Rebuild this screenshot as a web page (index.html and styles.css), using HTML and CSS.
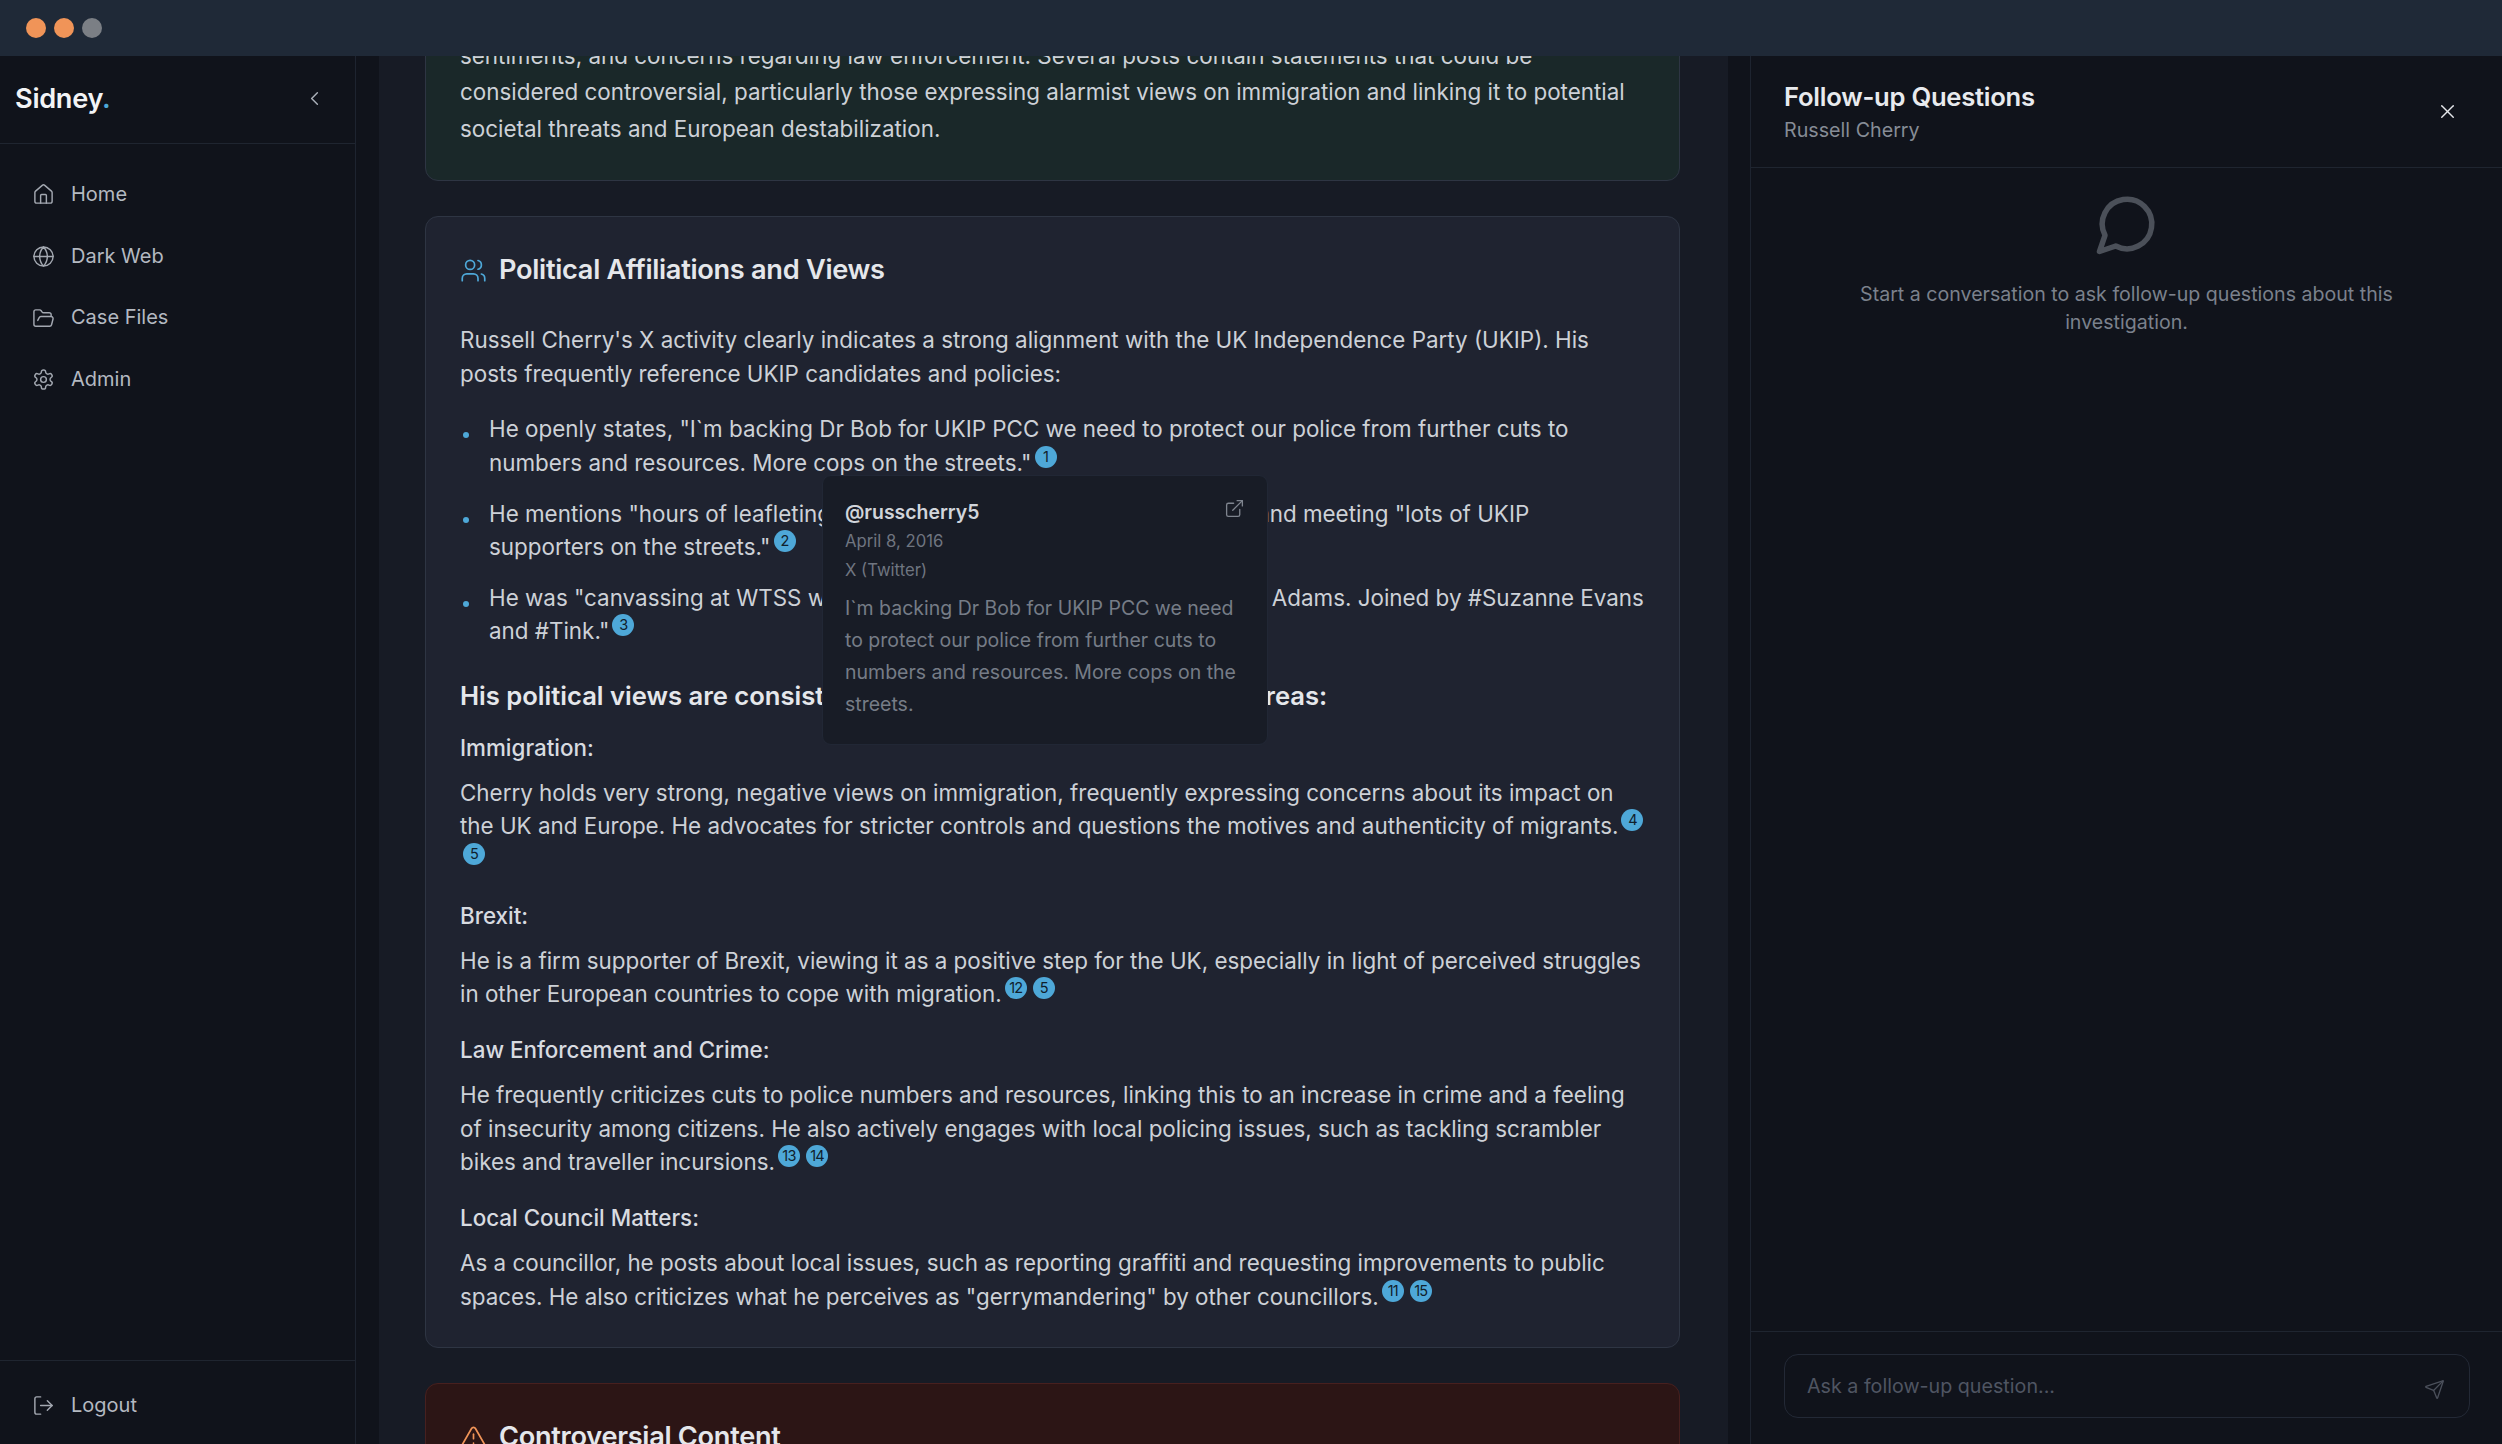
FILE: index.html
```html
<!DOCTYPE html>
<html lang="en">
<head>
  <meta charset="UTF-8">
  <meta name="viewport" content="width=device-width, initial-scale=1.0">
  <title>Sidney</title>
  <link rel="stylesheet" href="styles.css">
</head>
<body>
  <div class="titlebar">
    <span class="light orange"></span>
    <span class="light orange"></span>
    <span class="light gray"></span>
  </div>

  <div class="app">
    <aside class="sidebar">
      <div class="brand">
        <div class="logo">Sidney<span class="logo-dot">.</span></div>
        <svg class="icon collapse" viewBox="0 0 24 24"><path d="m15 18-6-6 6-6"/></svg>
      </div>
      <nav class="nav">
        <a class="nav-item">
          <svg class="icon" viewBox="0 0 24 24"><path d="M15 21v-8a1 1 0 0 0-1-1h-4a1 1 0 0 0-1 1v8"/><path d="M3 10a2 2 0 0 1 .709-1.528l7-5.999a2 2 0 0 1 2.582 0l7 5.999A2 2 0 0 1 21 10v9a2 2 0 0 1-2 2H5a2 2 0 0 1-2-2z"/></svg>
          Home
        </a>
        <a class="nav-item">
          <svg class="icon" viewBox="0 0 24 24"><circle cx="12" cy="12" r="10"/><path d="M12 2a14.5 14.5 0 0 0 0 20 14.5 14.5 0 0 0 0-20"/><path d="M2 12h20"/></svg>
          Dark Web
        </a>
        <a class="nav-item">
          <svg class="icon" viewBox="0 0 24 24"><path d="m6 14 1.5-2.9A2 2 0 0 1 9.24 10H20a2 2 0 0 1 1.94 2.5l-1.54 6a2 2 0 0 1-1.95 1.5H4a2 2 0 0 1-2-2V5a2 2 0 0 1 2-2h3.9a2 2 0 0 1 1.69.9l.81 1.2a2 2 0 0 0 1.67.9H18a2 2 0 0 1 2 2v2"/></svg>
          Case Files
        </a>
        <a class="nav-item">
          <svg class="icon" viewBox="0 0 24 24"><path d="M12.22 2h-.44a2 2 0 0 0-2 2v.18a2 2 0 0 1-1 1.73l-.43.25a2 2 0 0 1-2 0l-.15-.08a2 2 0 0 0-2.73.73l-.22.38a2 2 0 0 0 .73 2.73l.15.1a2 2 0 0 1 1 1.72v.51a2 2 0 0 1-1 1.74l-.15.09a2 2 0 0 0-.73 2.73l.22.38a2 2 0 0 0 2.73.73l.15-.08a2 2 0 0 1 2 0l.43.25a2 2 0 0 1 1 1.73V20a2 2 0 0 0 2 2h.44a2 2 0 0 0 2-2v-.18a2 2 0 0 1 1-1.73l.43-.25a2 2 0 0 1 2 0l.15.08a2 2 0 0 0 2.73-.73l.22-.39a2 2 0 0 0-.73-2.73l-.15-.08a2 2 0 0 1-1-1.74v-.5a2 2 0 0 1 1-1.74l.15-.09a2 2 0 0 0 .73-2.73l-.22-.38a2 2 0 0 0-2.73-.73l-.15.08a2 2 0 0 1-2 0l-.43-.25a2 2 0 0 1-1-1.73V4a2 2 0 0 0-2-2z"/><circle cx="12" cy="12" r="3"/></svg>
          Admin
        </a>
      </nav>
      <div class="sidebar-foot">
        <a class="nav-item">
          <svg class="icon" viewBox="0 0 24 24"><path d="M9 21H5a2 2 0 0 1-2-2V5a2 2 0 0 1 2-2h4"/><path d="m16 17 5-5-5-5"/><path d="M21 12H9"/></svg>
          Logout
        </a>
      </div>
    </aside>

    <main class="content">
      <div class="scroll">
        <div class="stack">
          <section class="card card-green">
            <p>sentiments, and concerns regarding law enforcement. Several posts contain statements that could be considered controversial, particularly those expressing alarmist views on immigration and linking it to potential societal threats and European destabilization.</p>
          </section>

          <section class="card">
            <h2 class="card-title">
              <svg class="icon title-icon blue" viewBox="0 0 24 24"><path d="M16 21v-2a4 4 0 0 0-4-4H6a4 4 0 0 0-4 4v2"/><circle cx="9" cy="7" r="4"/><path d="M22 21v-2a4 4 0 0 0-3-3.87"/><path d="M16 3.13a4 4 0 0 1 0 7.75"/></svg>
              Political Affiliations and Views
            </h2>
            <p>Russell Cherry's X activity clearly indicates a strong alignment with the UK Independence Party (UKIP). His posts frequently reference UKIP candidates and policies:</p>
            <ul class="points">
              <li><div>He openly states, "I`m backing Dr Bob for UKIP PCC we need to protect our police from further cuts to numbers and resources. More cops on the streets."<span class="cite">1</span></div></li>
              <li><div>He mentions "hours of leafleting in Thanet with all the local team today," and meeting "lots of UKIP<br>supporters on the streets."<span class="cite">2</span></div></li>
              <li><div>He was "canvassing at WTSS with the local UKIP team and also Cllr. Tony Adams. Joined by #Suzanne Evans and #Tink."<span class="cite">3</span></div></li>
            </ul>
            <h3 class="lead">His political views are consistently right-wing, across these key areas:</h3>

            <h4 class="topic">Immigration:</h4>
            <p>Cherry holds very strong, negative views on immigration, frequently expressing concerns about its impact on the UK and Europe. He advocates for stricter controls and questions the motives and authenticity of migrants.<span class="cite">4</span><span class="cite">5</span></p>

            <h4 class="topic">Brexit:</h4>
            <p>He is a firm supporter of Brexit, viewing it as a positive step for the UK, especially in light of perceived struggles in other European countries to cope with migration.<span class="cite">12</span><span class="cite">5</span></p>

            <h4 class="topic">Law Enforcement and Crime:</h4>
            <p>He frequently criticizes cuts to police numbers and resources, linking this to an increase in crime and a feeling of insecurity among citizens. He also actively engages with local policing issues, such as tackling scrambler bikes and traveller incursions.<span class="cite">13</span><span class="cite">14</span></p>

            <h4 class="topic">Local Council Matters:</h4>
            <p>As a councillor, he posts about local issues, such as reporting graffiti and requesting improvements to public spaces. He also criticizes what he perceives as "gerrymandering" by other councillors.<span class="cite">11</span><span class="cite">15</span></p>

            <div class="tooltip">
              <div class="tooltip-head">
                <span class="handle">@russcherry5</span>
                <svg class="icon open-link" viewBox="0 0 24 24"><path d="M15 3h6v6"/><path d="M10 14 21 3"/><path d="M18 13v6a2 2 0 0 1-2 2H5a2 2 0 0 1-2-2V8a2 2 0 0 1 2-2h6"/></svg>
              </div>
              <div class="meta">April 8, 2016</div>
              <div class="meta">X (Twitter)</div>
              <p class="quote">I`m backing Dr Bob for UKIP PCC we need to protect our police from further cuts to numbers and resources. More cops on the streets.</p>
            </div>
          </section>

          <section class="card card-red">
            <h2 class="card-title">
              <svg class="icon title-icon orange-icon" viewBox="0 0 24 24"><path d="m21.73 18-8-14a2 2 0 0 0-3.48 0l-8 14A2 2 0 0 0 4 21h16a2 2 0 0 0 1.73-3"/><path d="M12 9v4"/><path d="M12 17h.01"/></svg>
              Controversial Content
            </h2>
          </section>
        </div>
      </div>
    </main>

    <aside class="panel">
      <header class="panel-head">
        <div>
          <h2 class="panel-title">Follow-up Questions</h2>
          <div class="panel-sub">Russell Cherry</div>
        </div>
        <svg class="icon close" viewBox="0 0 24 24"><path d="M18 6 6 18"/><path d="m6 6 12 12"/></svg>
      </header>
      <div class="panel-body">
        <svg class="icon chat" viewBox="0 0 24 24"><path d="M7.9 20A9 9 0 1 0 4 16.1L2 22Z"/></svg>
        <p class="empty">Start a conversation to ask follow-up questions about this investigation.</p>
      </div>
      <div class="panel-foot">
        <div class="ask">
          <input class="ask-input" type="text" placeholder="Ask a follow-up question...">
          <svg class="icon send" viewBox="0 0 24 24"><path d="M14.536 21.686a.5.5 0 0 0 .937-.024l6.5-19a.496.496 0 0 0-.635-.635l-19 6.5a.5.5 0 0 0-.024.937l7.93 3.18a2 2 0 0 1 1.112 1.11z"/><path d="m21.854 2.147-10.94 10.939"/></svg>
        </div>
      </div>
    </aside>
  </div>
</body>
</html>
```

FILE: styles.css
```css
* {
  box-sizing: border-box;
}

html,
body {
  margin: 0;
  height: 100%;
}

body {
  height: 1444px;
  overflow: hidden;
  display: flex;
  flex-direction: column;
  background-color: #10131b;
  color: #cdd1d7;
  font-family: Inter, "Liberation Sans", sans-serif;
  font-size: 22.4px;
  line-height: 33.6px;
}

.icon {
  flex: none;
  fill: none;
  stroke: currentColor;
  stroke-width: 1.5;
  stroke-linecap: round;
  stroke-linejoin: round;
}

/* top window bar */
.titlebar {
  height: 56px;
  flex: none;
  display: flex;
  align-items: center;
  gap: 8px;
  padding-left: 26px;
  background-color: #1f2937;
  padding-bottom: 1px;
}

.light {
  width: 20px;
  height: 20px;
  border-radius: 50%;
}

.light.orange {
  background-color: #f09458;
}

.light.gray {
  background-color: #7b7f85;
}

.app {
  flex: 1;
  min-height: 0;
  display: flex;
}

/* left nav */
.sidebar {
  width: 356px;
  flex: none;
  display: flex;
  flex-direction: column;
  border-right: 1px solid #1e2430;
  background-color: #10131b;
}

.brand {
  height: 88px;
  flex: none;
  display: flex;
  align-items: center;
  justify-content: space-between;
  padding: 0 29px 1px 15px;
  border-bottom: 1px solid #1f2530;
}

.logo {
  font-size: 27.2px;
  font-weight: 600;
  letter-spacing: -0.3px;
  color: #f3f4f6;
}

.logo-dot {
  color: #4ea8d8;
}

.collapse {
  width: 23px;
  height: 23px;
  margin-bottom: 2px;
  color: #aab0b9;
}

.nav {
  flex: 1;
  padding-top: 20px;
}

.nav-item {
  height: 61.7px;
  display: flex;
  align-items: center;
  gap: 16px;
  padding-left: 32px;
  font-size: 20px;
  color: #b4b9c1;
}

.nav-item .icon {
  width: 23px;
  height: 23px;
  color: #a3a8b1;
}

.sidebar-foot {
  height: 84px;
  flex: none;
  padding-top: 14px;
  border-top: 1px solid #1f2530;
}

/* middle column */
.content {
  flex: 1;
  min-width: 0;
  padding: 0 22px 0 23px;
  overflow: hidden;
}

.scroll {
  height: 100%;
  overflow: hidden;
  padding: 0 48px 0 46px;
  background-color: #171b25;
}

.stack {
  display: flex;
  flex-direction: column;
  gap: 35px;
  margin-top: -54px;
}

.card {
  position: relative;
  padding: 34px 32px 34px 34px;
  border: 1px solid #2e3543;
  border-radius: 13px;
  background-color: #1f2330;
}

.card p {
  margin: 0;
}

.card-green {
  padding-top: 35px;
  padding-bottom: 33px;
  background-color: #1a2829;
  line-height: 36.4px;
}

.card-red {
  background-color: #2c1515;
  border-color: #47201f;
}

.card-title {
  display: flex;
  align-items: center;
  gap: 13px;
  margin: -1px 0 33px;
  font-size: 27.2px;
  line-height: 40px;
  font-weight: 600;
  letter-spacing: -0.3px;
  color: #e5e7eb;
}

.title-icon {
  width: 27px;
  height: 27px;
}

.card-title .title-icon {
  margin-right: -1px;
}

.blue {
  color: #4ea8d8;
}

.orange-icon {
  color: #f09458;
}

.points {
  list-style: none;
  margin: 22px 0 0;
  padding: 0 0 0 3px;
}

.points li {
  display: flex;
  gap: 20px;
  margin-top: 17px;
}

.points li:first-child {
  margin-top: 0;
}

.points li::before {
  content: "";
  flex: none;
  width: 6px;
  height: 6px;
  margin-top: 20px;
  border-radius: 50%;
  background-color: #4ea8d8;
}

.cite {
  display: inline-block;
  min-width: 22px;
  height: 22px;
  margin: 0 3px;
  border-radius: 50%;
  background-color: #4ea8d8;
  color: #10202c;
  font-size: 14.5px;
  line-height: 22px;
  text-align: center;
  vertical-align: 9px;
  letter-spacing: -0.8px;
}

.lead {
  margin: 29px 0 0;
  font-size: 25.6px;
  line-height: 38px;
  font-weight: 600;
  color: #e5e7eb;
}

.topic {
  margin: 22.4px 0 11.2px;
  font-size: 22.4px;
  font-weight: 500;
  color: #d8dbe0;
}

.lead + .topic {
  margin-top: 16px;
}

/* citation popover */
.tooltip {
  position: absolute;
  top: 258px;
  left: 396px;
  width: 446px;
  height: 270px;
  padding: 21px 22px;
  border: 1px solid #212735;
  border-radius: 9px;
  background-color: #181c26;
}

.tooltip-head {
  display: flex;
  align-items: flex-start;
  justify-content: space-between;
}

.handle {
  font-size: 19.4px;
  line-height: 30px;
  font-weight: 600;
  color: #d1d5db;
}

.open-link {
  width: 21px;
  height: 21px;
  margin-top: 1px;
  color: #7f858f;
}

.meta {
  font-size: 16.7px;
  line-height: 28.5px;
  color: #6f7580;
}

.card .quote {
  margin-top: 8px;
  font-size: 19.5px;
  line-height: 32px;
  color: #767c87;
}

/* right panel */
.panel {
  width: 752px;
  flex: none;
  display: flex;
  flex-direction: column;
  border-left: 1px solid #1e2430;
  background-color: #10131b;
}

.panel-head {
  height: 112px;
  flex: none;
  display: flex;
  align-items: center;
  justify-content: space-between;
  padding: 0 43px 0 33px;
  border-bottom: 1px solid #1f2530;
}

.panel-title {
  margin: 0;
  font-size: 25.6px;
  line-height: 36px;
  font-weight: 600;
  letter-spacing: -0.25px;
  color: #e8eaee;
}

.panel-sub {
  font-size: 19.7px;
  line-height: 30px;
  color: #868c96;
}

.close {
  width: 23px;
  height: 23px;
  color: #e5e7eb;
}

.panel-body {
  flex: 1;
  display: flex;
  flex-direction: column;
  align-items: center;
  padding: 23px 33px 0;
}

.chat {
  width: 66px;
  height: 66px;
  color: #4b5059;
  stroke-width: 2;
}

.empty {
  width: 600px;
  margin: 23px 0 0;
  font-size: 19.6px;
  line-height: 28px;
  text-align: center;
  color: #7b818c;
}

.panel-foot {
  height: 113px;
  flex: none;
  padding: 22px 32px 0 33px;
  border-top: 1px solid #1f2530;
}

.ask {
  height: 64px;
  display: flex;
  align-items: center;
  padding: 0 24px 0 22px;
  border: 1px solid #232936;
  border-radius: 14px;
}

.ask-input {
  flex: 1;
  min-width: 0;
  border: none;
  outline: none;
  padding: 0;
  background: transparent;
  color: #d1d5db;
  font-family: inherit;
  font-size: 19.7px;
}

.ask-input::placeholder {
  color: #4f5562;
}

.send {
  width: 21px;
  height: 21px;
  margin-top: 6px;
  color: #4b505b;
}
```
